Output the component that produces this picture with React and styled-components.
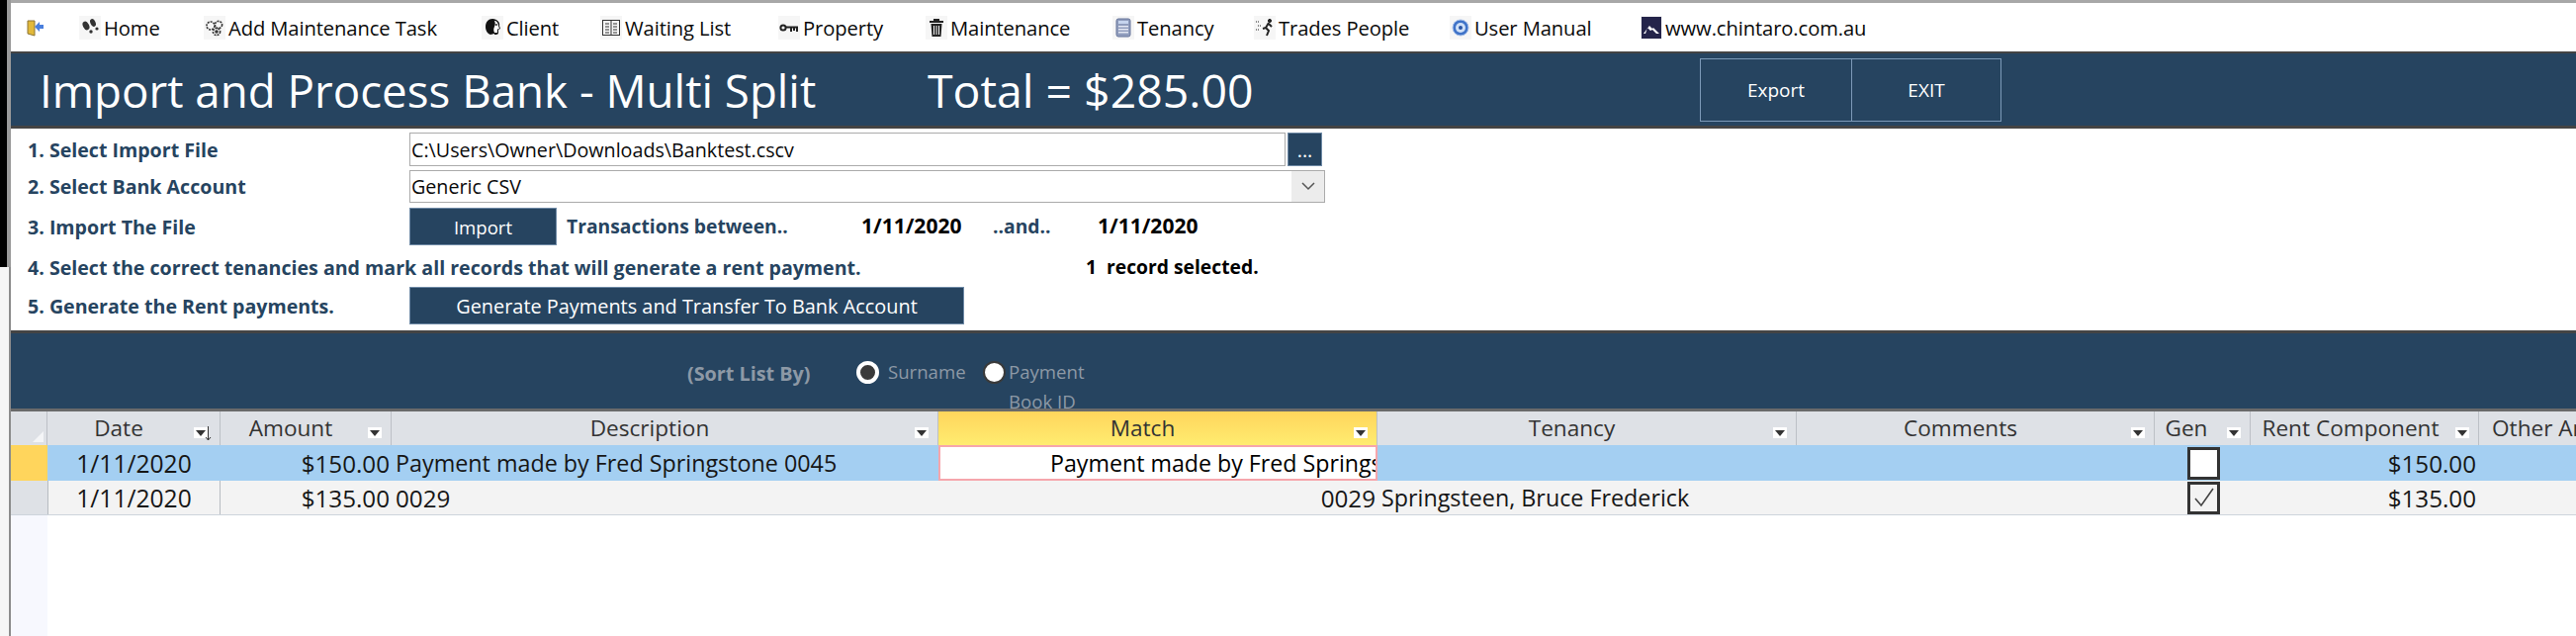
import React from 'react';
import styled, { createGlobalStyle } from 'styled-components';

const navy = '#264460';
const uiFont = '"Open Sans", "Noto Sans", "Liberation Sans", sans-serif';

const GlobalStyle = createGlobalStyle`
  html, body { margin: 0; padding: 0; background: #fff; overflow: hidden; }
  body { font-family: ${uiFont}; color: #000; }
`;

const Page = styled.div`
  display: flex;
  width: 2605px;
  height: 643px;
  overflow: hidden;
`;

const Rail = styled.div`
  flex: 0 0 11px;
  display: flex;
  flex-direction: column;
`;

const RailTop = styled.div`
  height: 270px;
  background: #000;
  border-right: 4px solid #9a9a9a;
  box-sizing: border-box;
`;

const RailBottom = styled.div`
  flex: 1;
  background: #f6f6f6;
  border-right: 2px solid #8c8c8c;
  box-sizing: border-box;
`;

const Main = styled.div`
  flex: 1;
  min-width: 0;
  display: flex;
  flex-direction: column;
`;

const Toolbar = styled.nav`
  height: 49px;
  display: flex;
  align-items: center;
  padding-left: 16px;
  background: #fff;
  border-top: 3px solid #a8a8a8;
`;

const ToolItem = styled.div`
  flex: 0 0 ${p => p.$width}px;
  display: flex;
  align-items: center;
  gap: 3px;
  font-size: 20.2px;
  letter-spacing: -0.1px;
  color: #0a0a0a;
  white-space: nowrap;
`;

const IconTile = styled.span`
  width: 22px;
  height: 24px;
  display: flex;
  align-items: center;
  justify-content: center;
  background: #f6f6f6;
`;

const TitleBar = styled.header`
  height: 73px;
  display: flex;
  align-items: center;
  padding-left: 29px;
  background: ${navy};
  border-top: 2px solid #444;
  border-bottom: 3px solid #444;
  color: #fff;
`;

const Title = styled.h1`
  flex: 0 0 898px;
  margin: 0;
  font-size: 45.7px;
  font-weight: 400;
  white-space: nowrap;
`;

const Total = styled.div`
  flex: 0 0 781px;
  font-size: 46.4px;
  font-weight: 400;
  white-space: nowrap;
`;

const ActionGroup = styled.div`
  display: flex;
  height: 62px;
  border: 1px solid #7d9ab8;
`;

const ActionButton = styled.div`
  width: ${p => p.$width}px;
  display: flex;
  align-items: center;
  justify-content: center;
  font-size: 19px;
  color: #fff;
  & + & { border-left: 1px solid #7d9ab8; }
`;

const Form = styled.section`
  height: 204px;
  padding: 4px 0 0 17px;
  box-sizing: border-box;
  background: #fff;
`;

const FormRow = styled.div`
  height: ${p => p.$height}px;
  margin-bottom: ${p => p.$gap || 0}px;
  display: flex;
  align-items: center;
`;

const StepLabel = styled.div`
  flex: 0 0 ${p => p.$width || 386}px;
  font-size: 19.6px;
  font-weight: 700;
  color: ${navy};
  white-space: nowrap;
`;

const TextField = styled.div`
  box-sizing: border-box;
  width: ${p => p.$width}px;
  height: 100%;
  display: flex;
  align-items: center;
  justify-content: space-between;
  padding-left: 1px;
  background: #fff;
  border: 1px solid #ababab;
  font-size: 19.7px;
  color: #0a0a0a;
`;

const DropButton = styled.span`
  width: 33px;
  height: 100%;
  display: flex;
  align-items: center;
  justify-content: center;
  background: #ececec;
`;

const NavyButton = styled.div`
  box-sizing: border-box;
  width: ${p => p.$width}px;
  height: ${p => p.$height || 38}px;
  margin-left: ${p => p.$left || 0}px;
  display: flex;
  align-items: center;
  justify-content: center;
  background: ${navy};
  border: 1px solid #6f8aa6;
  color: #fff;
  font-size: ${p => p.$size || 19.9}px;
`;

const RowText = styled.div`
  flex: 0 0 ${p => p.$width}px;
  margin-left: ${p => p.$left || 0}px;
  font-size: ${p => p.$size || 19.3}px;
  font-weight: 700;
  color: ${p => (p.$dark ? '#000' : navy)};
  white-space: nowrap;
  transform: translateY(-1px);
`;

const SortBar = styled.section`
  height: 76px;
  display: flex;
  padding-left: 684px;
  background: ${navy};
  border-top: 3px solid #444;
  border-bottom: 3px solid #6a6a6a;
  overflow: hidden;
`;

const SortLabel = styled.div`
  flex: 0 0 171px;
  margin-top: 27px;
  font-size: 19.8px;
  font-weight: 700;
  color: #8d99a6;
`;

const RadioGroup = styled.div`
  display: flex;
  margin-top: 28px;
`;

const RadioDot = styled.span`
  box-sizing: border-box;
  width: 23px;
  height: 23px;
  border-radius: 50%;
  background: ${p => (p.$checked ? '#3a3a3a' : '#fff')};
  border: ${p => (p.$checked ? '4px solid #fff' : '2px solid #3a3a3a')};
`;

const RadioText = styled.div`
  flex: 0 0 ${p => p.$width}px;
  margin-left: ${p => p.$left}px;
  font-size: 18.6px;
  line-height: 30px;
  margin-top: -4px;
  color: #8d99a6;
`;

const Grid = styled.div`
  flex: 1;
  display: flex;
  flex-direction: column;
  background: #fff;
`;

const GridRow = styled.div`
  display: flex;
  height: ${p => p.$height}px;
  background: ${p => p.$bg};
  border-bottom: ${p => (p.$line ? `1px solid ${p.$line}` : 'none')};
  box-sizing: border-box;
`;

const HeaderCell = styled.div`
  flex: 0 0 ${p => p.$w}px;
  box-sizing: border-box;
  padding-right: ${p => p.$pad || 0}px;
  padding-left: ${p => p.$left || 0}px;
  padding-bottom: 2px;
  display: flex;
  align-items: center;
  justify-content: ${p => (p.$left ? 'flex-start' : 'center')};
  position: relative;
  font-size: 22.6px;
  color: #333;
  white-space: nowrap;
  overflow: hidden;
  background: ${p => (p.$active ? 'linear-gradient(#ffd55c, #ffec70)' : '#dee1e6')};
  border-right: 1px solid #bcc0c6;
`;

const Corner = styled.i`
  width: 0;
  height: 0;
  position: absolute;
  right: 3px;
  bottom: 3px;
  border-style: solid;
  border-width: 0 0 11px 11px;
  border-color: transparent transparent #f4f5f7 transparent;
`;

const FilterMark = styled.span`
  width: 14px;
  height: 11px;
  position: absolute;
  right: ${p => p.$right || 9}px;
  top: 16px;
  display: flex;
  justify-content: center;
  align-items: center;
  background: #fff;
  &::after {
    content: '';
    border-style: solid;
    border-width: 6px 5px 0 5px;
    border-color: #333 transparent transparent transparent;
  }
`;

const SortArrow = styled.svg`
  position: absolute;
  right: 8px;
  top: 15px;
`;

const Cell = styled.div`
  flex: 0 0 ${p => p.$w}px;
  box-sizing: border-box;
  display: flex;
  align-items: center;
  justify-content: ${p => p.$align || 'flex-start'};
  padding: 0 ${p => p.$right || 0}px 0 ${p => p.$left || 0}px;
  font-size: ${p => p.$size || 23.3}px;
  color: #161616;
  white-space: nowrap;
  overflow: hidden;
  background: ${p => p.$bg || 'transparent'};
  border-left: ${p => (p.$divider ? '1px solid #b7bcc2' : 'none')};
  border-right: ${p => (p.$divider ? '1px solid #b7bcc2' : 'none')};
`;

const MatchEditor = styled(Cell)`
  background: #fff;
  border: 2px solid #f6a6ac;
  color: #000;
`;

const CheckBox = styled.span`
  box-sizing: border-box;
  width: 33px;
  height: 33px;
  display: flex;
  align-items: center;
  justify-content: center;
  background: ${p => p.$bg};
  border: 3px solid #333;
`;

const EmptyGutter = styled.div`
  width: 37px;
  flex: 1;
  background: #f7f8fe;
`;

const DoorIcon = () => (
  <svg width="18" height="18" viewBox="0 0 18 18">
    <path d="M1 2h7v15l-7-2z" fill="#e2b93a" stroke="#8c7434" strokeWidth="1" />
    <path d="M8 8l5-5v3h4v4h-4v3z" fill="#4a7fdd" />
  </svg>
);

const StepsIcon = () => (
  <svg width="20" height="20" viewBox="0 0 20 20" fill="#333">
    <ellipse cx="6" cy="8" rx="3" ry="4.6" transform="rotate(-28 6 8)" />
    <circle cx="11" cy="14" r="1.7" />
    <ellipse cx="13" cy="5" rx="2.6" ry="4" transform="rotate(-24 13 5)" />
    <circle cx="17" cy="11" r="1.6" />
  </svg>
);

const GearsIcon = () => (
  <svg width="20" height="20" viewBox="0 0 20 20" fill="none" stroke="#333" strokeWidth="1.6">
    <circle cx="6" cy="8" r="4" strokeDasharray="2 1" />
    <circle cx="14" cy="7" r="3.6" strokeDasharray="2 1" />
    <circle cx="12" cy="14" r="3.6" strokeDasharray="2 1" />
    <circle cx="12" cy="14" r="1" fill="#333" />
  </svg>
);

const HeadIcon = () => (
  <svg width="20" height="20" viewBox="0 0 20 20">
    <path d="M10 1c5 0 8 4 7 7l1 3-2 1v3c0 2-2 2-4 2v-1L8 17c-3-1-5-4-5-8 0-5 3-8 7-8z" fill="#111" />
    <path d="M12 3c2 0 4 2 4 5l1 3-2 .6V15h-3c-1-2-1-4 0-6 1-2 1-4 0-6z" fill="#fff" />
    <circle cx="14" cy="7" r=".9" fill="#111" />
  </svg>
);

const BookIcon = () => (
  <svg width="20" height="18" viewBox="0 0 20 18" fill="none" stroke="#333" strokeWidth="1">
    <rect x="1.5" y="1.5" width="17" height="15" fill="#f4f4f4" />
    <path d="M10 1.5v15M4 5h4M4 8h4M4 11h4M4 14h4M12 5h4M12 8h4M12 11h4M12 14h4" />
  </svg>
);

const KeyIcon = () => (
  <svg width="20" height="12" viewBox="0 0 20 12" fill="none" stroke="#222">
    <circle cx="4" cy="6" r="2.6" strokeWidth="2" />
    <path d="M7 5.5h12M12 6v4M15 6v3M18 6v4" strokeWidth="2" />
  </svg>
);

const TrashIcon = () => (
  <svg width="16" height="20" viewBox="0 0 16 20" fill="#222">
    <path d="M1 3h14v2H1zM5 1h6v2H5z" />
    <path d="M2.5 6h11l-1 13h-9zM5 8v9h1V8zm2.5 0v9h1V8zM10 8v9h1V8z" fillRule="evenodd" />
  </svg>
);

const CalcIcon = () => (
  <svg width="16" height="20" viewBox="0 0 16 20">
    <rect x="1" y="1" width="14" height="18" rx="2" fill="#8f9cbc" stroke="#69779c" />
    <rect x="3" y="3" width="10" height="3" fill="#c6d4ee" />
    <path d="M3 8h10v1.6H3zM3 11h10v1.6H3zM3 14h10v1.6H3z" fill="#e2e6f2" />
  </svg>
);

const RunnerIcon = () => (
  <svg width="20" height="20" viewBox="0 0 20 20" fill="none" stroke="#222">
    <circle cx="15" cy="3" r="1.6" fill="#222" />
    <path d="M14 5l-3 5 3 3-2 5M11 10l-3 1M14 6l3 3" strokeWidth="2" />
    <path d="M1 4h4M3 8h3M1 12h3" strokeDasharray="1 1" />
  </svg>
);

const HelpIcon = () => (
  <svg width="18" height="18" viewBox="0 0 18 18">
    <circle cx="9" cy="9" r="8" fill="#3f73c8" stroke="#a9c2ea" />
    <circle cx="9" cy="9" r="5" fill="#cfe0f7" />
    <circle cx="9" cy="9" r="2" fill="#2a55a5" />
  </svg>
);

const PeakIcon = () => (
  <svg width="20" height="22" viewBox="0 0 20 22">
    <rect width="20" height="22" fill="#24244a" />
    <path d="M2 17l6-8 3 3 1-1 6 6h-3l-4-4-2 1-3-3-2 6z" fill="#fff" />
  </svg>
);

const CheckGlyph = () => (
  <svg width="24" height="24" viewBox="0 0 24 24" fill="none" stroke="#444" strokeWidth="1.6">
    <path d="M3 13l6 7L21 3" />
  </svg>
);

const toolItems = [
  { label: 'Home', width: 126, icon: <StepsIcon /> },
  { label: 'Add Maintenance Task', width: 281, icon: <GearsIcon /> },
  { label: 'Client', width: 120, icon: <HeadIcon /> },
  { label: 'Waiting List', width: 180, icon: <BookIcon /> },
  { label: 'Property', width: 149, icon: <KeyIcon /> },
  { label: 'Maintenance', width: 189, icon: <TrashIcon /> },
  { label: 'Tenancy', width: 143, icon: <CalcIcon /> },
  { label: 'Trades People', width: 198, icon: <RunnerIcon /> },
  { label: 'User Manual', width: 193, icon: <HelpIcon /> },
  { label: 'www.chintaro.com.au', width: 240, icon: <PeakIcon /> },
];

const columns = [
  { key: 'date', label: 'Date', w: 175, pad: 30, filterRight: 12, sorted: true },
  { key: 'amount', label: 'Amount', w: 173, pad: 30 },
  { key: 'description', label: 'Description', w: 553, pad: 30 },
  { key: 'match', label: 'Match', w: 444, pad: 30, active: true },
  { key: 'tenancy', label: 'Tenancy', w: 424, pad: 30 },
  { key: 'comments', label: 'Comments', w: 362, pad: 30 },
  { key: 'gen', label: 'Gen', w: 97, pad: 32 },
  { key: 'rent', label: 'Rent Component', w: 231, pad: 28 },
  { key: 'other', label: 'Other Amount', w: 190, left: 13, plain: true },
];

function App() {
  return (
    <Page>
      <GlobalStyle />
      <Rail>
        <RailTop />
        <RailBottom />
      </Rail>
      <Main>
        <Toolbar>
          <ToolItem $width={53}><DoorIcon /></ToolItem>
          {toolItems.map(item => (
            <ToolItem key={item.label} $width={item.width}>
              <IconTile>{item.icon}</IconTile>
              {item.label}
            </ToolItem>
          ))}
        </Toolbar>

        <TitleBar>
          <Title>Import and Process Bank - Multi Split</Title>
          <Total>Total = $285.00</Total>
          <ActionGroup>
            <ActionButton $width={152}>Export</ActionButton>
            <ActionButton $width={150}>EXIT</ActionButton>
          </ActionGroup>
        </TitleBar>

        <Form>
          <FormRow $height={34} $gap={4}>
            <StepLabel>1. Select Import File</StepLabel>
            <TextField $width={886}>C:\Users\Owner\Downloads\Banktest.cscv</TextField>
            <NavyButton $width={35} $height={34} $left={2}>...</NavyButton>
          </FormRow>
          <FormRow $height={33} $gap={5}>
            <StepLabel>2. Select Bank Account</StepLabel>
            <TextField $width={926}>
              Generic CSV
              <DropButton>
                <svg width="14" height="9" viewBox="0 0 14 9" fill="none" stroke="#555" strokeWidth="1.5">
                  <path d="M1 1l6 6 6-6" />
                </svg>
              </DropButton>
            </TextField>
          </FormRow>
          <FormRow $height={38} $gap={4}>
            <StepLabel>3. Import The File</StepLabel>
            <NavyButton $width={149} $size={18.6}>Import</NavyButton>
            <RowText $width={298} $left={10}>Transactions between..</RowText>
            <RowText $width={133} $dark $size={21}>1/11/2020</RowText>
            <RowText $width={106}>..and..</RowText>
            <RowText $width={110} $dark $size={21}>1/11/2020</RowText>
          </FormRow>
          <FormRow $height={36} $gap={2}>
            <StepLabel $width={1070}>4. Select the correct tenancies and mark all records that will generate a rent payment.</StepLabel>
            <RowText $width={200} $dark>1&nbsp;&nbsp;record selected.</RowText>
          </FormRow>
          <FormRow $height={38}>
            <StepLabel>5. Generate the Rent payments.</StepLabel>
            <NavyButton $width={561}>Generate Payments and Transfer To Bank Account</NavyButton>
          </FormRow>
        </Form>

        <SortBar>
          <SortLabel>(Sort List By)</SortLabel>
          <RadioGroup>
            <RadioDot $checked />
            <RadioText $width={96} $left={9}>Surname</RadioText>
            <RadioDot />
            <RadioText $width={110} $left={3}>Payment Book ID</RadioText>
          </RadioGroup>
        </SortBar>

        <Grid>
          <GridRow $height={34} $bg="#dee1e6">
            <HeaderCell $w={37}><Corner /></HeaderCell>
            {columns.map(col => (
              <HeaderCell key={col.key} $w={col.w} $pad={col.pad} $left={col.left} $active={col.active}>
                {col.label}
                {!col.plain && <FilterMark $right={col.filterRight} />}
                {col.sorted && (
                  <SortArrow width="7" height="16" viewBox="0 0 7 16" fill="none" stroke="#333">
                    <path d="M3.5 0v14M1 11l2.5 3L6 11" />
                  </SortArrow>
                )}
              </HeaderCell>
            ))}
          </GridRow>

          <GridRow $height={36} $bg="#a4cff2">
            <Cell $w={37} $bg="#ffd55c" />
            <Cell $w={175} $align="center" $size={24.6}>1/11/2020</Cell>
            <Cell $w={173} $align="flex-end" $right={2} $size={24.2}>$150.00</Cell>
            <Cell $w={553} $left={4}>Payment made by Fred Springstone 0045</Cell>
            <MatchEditor $w={444} $left={111} $size={23.2}>Payment made by Fred Springstone 0045</MatchEditor>
            <Cell $w={424} />
            <Cell $w={362} />
            <Cell $w={97} $left={33}>
              <CheckBox $bg="#fff" />
            </Cell>
            <Cell $w={231} $align="flex-end" $right={3} $size={24.2}>$150.00</Cell>
          </GridRow>

          <GridRow $height={35} $bg="#f3f3f3" $line="#cdd4dc">
            <Cell $w={37} $bg="#dee1e6" />
            <Cell $w={175} $align="center" $divider $size={24.6}>1/11/2020</Cell>
            <Cell $w={173} $align="flex-end" $right={2} $size={24.2}>$135.00</Cell>
            <Cell $w={553} $left={4} $size={24.2}>0029</Cell>
            <Cell $w={444} $align="flex-end" $right={2} $size={24.2}>0029</Cell>
            <Cell $w={424} $left={4}>Springsteen, Bruce Frederick</Cell>
            <Cell $w={362} />
            <Cell $w={97} $left={33}>
              <CheckBox $bg="#f3f3f3"><CheckGlyph /></CheckBox>
            </Cell>
            <Cell $w={231} $align="flex-end" $right={3} $size={24.2}>$135.00</Cell>
          </GridRow>

          <EmptyGutter />
        </Grid>
      </Main>
    </Page>
  );
}

export default App;
